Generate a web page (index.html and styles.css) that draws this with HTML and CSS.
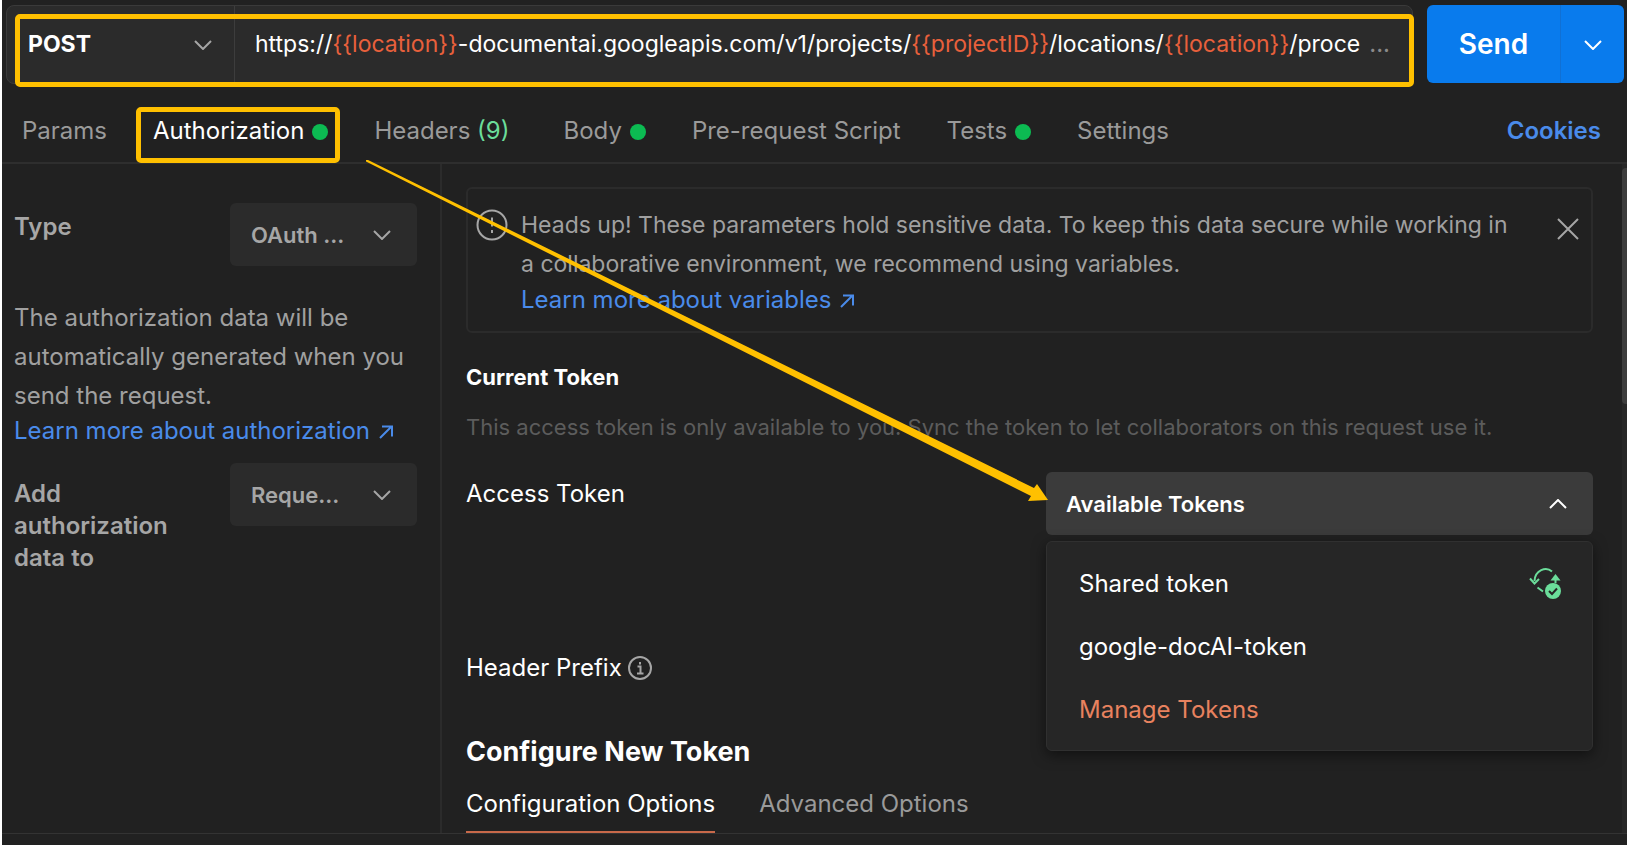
FILE: index.html
```html
<!DOCTYPE html>
<html lang="en">
<head>
<meta charset="utf-8">
<title>Request authorization</title>
<link rel="stylesheet" href="styles.css">
</head>
<body>
<div class="app">
  <header class="request">
    <div class="url-bar">
      <label class="picker method">
        <select aria-label="HTTP method"><option>POST</option></select>
        <svg class="chevron" viewBox="0 0 18 10"><path d="M1 1l8 8 8-8"/></svg>
      </label>
      <div class="url" role="textbox" aria-label="Request URL" contenteditable="true" spellcheck="false">https://<span class="var">{{location}}</span>-documentai.googleapis.com/v1/projects/<span class="var">{{projectID}}</span>/locations/<span class="var">{{location}}</span>/proce</div>
      <span class="more">...</span>
    </div>
    <div class="send">
      <button class="send-main">Send</button>
      <button class="send-more" aria-label="More send options"><svg class="chevron" viewBox="0 0 18 10"><path d="M1 1l8 8 8-8"/></svg></button>
    </div>
    <div class="mark mark-url"></div>
  </header>

  <nav class="tabs">
    <button class="tab">Params</button>
    <button class="tab active">Authorization<i class="dot"></i><span class="mark mark-tab"></span></button>
    <button class="tab headers">Headers <span class="count">(9)</span></button>
    <button class="tab">Body<i class="dot"></i></button>
    <button class="tab">Pre-request Script</button>
    <button class="tab">Tests<i class="dot"></i></button>
    <button class="tab">Settings</button>
    <a class="cookies" href="#">Cookies</a>
  </nav>

  <div class="panels">
    <aside class="side">
      <div class="field">
        <label class="field-label type-label" for="type">Type</label>
        <span class="picker">
          <select id="type"><option>OAuth ...</option></select>
          <svg class="chevron" viewBox="0 0 18 10"><path d="M1 1l8 8 8-8"/></svg>
        </span>
      </div>
      <p class="note">The authorization data will be automatically generated when you send the request.</p>
      <a class="link" href="#">Learn more about authorization <svg class="out" viewBox="0 0 14 14"><path d="M1 13L12 2M3 1.500h10v10"/></svg></a>
      <div class="field add">
        <label class="field-label" for="addto">Add authorization data to</label>
        <span class="picker">
          <select id="addto"><option>Reque...</option></select>
          <svg class="chevron" viewBox="0 0 18 10"><path d="M1 1l8 8 8-8"/></svg>
        </span>
      </div>
    </aside>

    <main class="main">
      <section class="alert">
        <svg class="warn" viewBox="0 0 32 32"><circle cx="16" cy="16" r="14.500"/><path d="M16 8.500v9M16 21v3"/></svg>
        <div class="alert-body">
          <p class="note">Heads up! These parameters hold sensitive data. To keep this data secure while working in a collaborative environment, we recommend using variables.</p>
          <a class="link" href="#">Learn more about variables <svg class="out" viewBox="0 0 14 14"><path d="M1 13L12 2M3 1.500h10v10"/></svg></a>
        </div>
        <button class="close" aria-label="Dismiss"><svg viewBox="0 0 22 22"><path d="M1 1l20 20M21 1L1 21"/></svg></button>
      </section>

      <h3 class="sub">Current Token</h3>
      <p class="hint">This access token is only available to you. Sync the token to let collaborators on this request use it.</p>

      <div class="row token-row">
        <span class="row-label" id="access">Access Token</span>
        <div class="dropdown">
          <button class="dropdown-head" aria-expanded="true">Available Tokens<svg class="chevron" viewBox="0 0 18 10"><path d="M1 9l8-8 8 8"/></svg></button>
          <div class="menu" role="menu">
            <button class="item" role="menuitem">Shared token
              <svg class="sync" viewBox="0 0 32 34"><path d="M23 4.500C17-1 6 3 5.500 14" class="ln"/><path d="M1 11.500l4.500 5 4.500-4.500M8.500 20.500l5.500 4" class="ln"/><path d="M21.500 13.500l5-6.500 5 6.500z" class="solid"/><path d="M26.500 11v5" class="ln"/><circle cx="24" cy="24" r="8" class="solid"/><path d="M20 24l3 3 5-5.500" class="tick"/></svg>
            </button>
            <button class="item" role="menuitem">google-docAI-token</button>
            <button class="item manage" role="menuitem">Manage Tokens</button>
          </div>
        </div>
      </div>

      <div class="row prefix">
        <span class="row-label">Header Prefix</span>
        <svg class="info" viewBox="0 0 24 24"><circle cx="12" cy="12" r="11"/><path d="M9.500 10.500H12.500V17M9 17.500h6.500M12 6v2.500"/></svg>
      </div>

      <h2 class="title">Configure New Token</h2>
      <div class="subtabs">
        <button class="subtab on">Configuration Options</button>
        <button class="subtab">Advanced Options</button>
      </div>
    </main>
    <div class="scroll"><div class="thumb"></div></div>
  </div>
  <footer class="foot"></footer>

  <svg class="arrow" width="700" height="360" viewBox="0 0 700 360"><path d="M0 0L2 0L668 328L671 324L682 340L662 341L665 336L0 1.500z"/></svg>
</div>
</body>
</html>
```
FILE: styles.css
```css
* { box-sizing: border-box; }
body {
  margin: 0;
  background: #212121;
  color: #fff;
  font: 24px/32px Inter, "Liberation Sans", sans-serif;
}
h2, h3, p { margin: 0; }
button, select {
  font: inherit;
  color: inherit;
  background: none;
  border: 0;
  padding: 0;
  margin: 0;
  text-align: left;
}
a { text-decoration: none; }
svg { fill: none; stroke: currentColor; stroke-width: 2; flex: none; }
.app {
  position: relative;
  min-height: 100vh;
  display: flex;
  flex-direction: column;
  border-left: 2px solid #fff;
  overflow: hidden;
}

/* request line */
.request {
  position: relative;
  display: flex;
  gap: 14px;
  padding: 5px 3px 0 4px;
}
.url-bar {
  flex: 1;
  min-width: 0;
  height: 79px;
  display: flex;
  background: #2b2b2b;
  border: 1px solid #3a3a3a;
  border-radius: 8px;
}
.picker { position: relative; display: block; }
.picker select {
  appearance: none;
  width: 100%;
  height: 100%;
  outline: 0;
}
.chevron { width: 18px; height: 10px; }
.picker .chevron {
  position: absolute;
  right: 26px;
  top: 50%;
  margin-top: -5px;
  color: #a6a6a6;
  pointer-events: none;
}
.method { width: 228px; border-right: 1px solid #3d3d3d; }
.method select { padding: 0 21px 2px; font-size: 23px; font-weight: 700; }
.method .chevron { right: 22px; }
.url {
  flex: 1;
  min-width: 0;
  padding: 22px 0 0;
  margin-left: 20px;
  font-size: 23px;
  white-space: nowrap;
  overflow: hidden;
  outline: 0;
}
.var { color: #e8603c; }
.more { padding: 22px 22px 0 4px; color: #8a8a8a; }
.send {
  width: 197px;
  height: 78px;
  display: flex;
  background: #097bed;
  border-radius: 6px;
}
.send-main { flex: 1; text-align: center; font-size: 28px; font-weight: 600; border-right: 1px solid #1070d4; }
.send-more { width: 63px; text-align: center; }
.send-more .chevron { vertical-align: middle; }

.mark { position: absolute; border: 5px solid #ffc000; border-radius: 5px; pointer-events: none; }
.mark-url { left: 13px; right: 213px; top: 14px; height: 73px; }
.mark-tab { left: -17px; right: -12px; top: -8px; height: 56px; }

/* tabs */
.tabs {
  display: flex;
  align-items: flex-start;
  gap: 46px;
  height: 80px;
  padding: 31px 26px 0 20px;
  border-bottom: 2px solid #2e2e2e;
}
.tab { position: relative; color: #9a9a9a; white-space: nowrap; }
.tab.active { color: #fff; }
.tab.headers { margin-right: 8px; }
.dot {
  display: inline-block;
  width: 16px;
  height: 16px;
  margin-left: 8px;
  border-radius: 50%;
  background: #0cbb52;
  vertical-align: -1px;
}
.count { color: #6bdd9a; }
.cookies { margin-left: auto; color: #4a8bea; font-weight: 600; }

/* panels */
.panels { flex: 1; display: flex; }
.side {
  width: 440px;
  padding: 39px 23px 0 12px;
  border-right: 2px solid #2b2b2b;
  color: #a6a6a6;
}
.field { display: flex; justify-content: space-between; }
.field-label { width: 170px; font-weight: 600; padding-top: 15px; }
.type-label { padding-top: 8px; }
.field .picker { width: 187px; height: 63px; background: #2b2b2b; border-radius: 6px; }
.field select { padding: 0 21px; font-size: 22px; font-weight: 600; }
.note { line-height: 39px; color: #a0a0a0; }
.side .note { margin-top: 32px; }
.link { display: block; color: #4a8bea; white-space: nowrap; }
.out { width: 14px; height: 14px; margin-left: 2px; }
.add { margin-top: 16px; }

.main { flex: 1; min-width: 0; padding: 23px 29px 0 24px; display: flex; flex-direction: column; }
.alert {
  display: flex;
  align-items: flex-start;
  height: 146px;
  padding: 17px 12px 0 8px;
  border: 2px solid #2b2b2b;
  border-radius: 6px;
}
.alert .note { padding-right: 24px; font-size: 23px; }
.warn { width: 32px; height: 32px; margin: 3px 13px 0 0; color: #a6a6a6; }
.alert-body { flex: 1; min-width: 0; }
.close { width: 22px; height: 22px; margin-top: 12px; margin-left: 12px; color: #a6a6a6; line-height: 0; }
.sub { margin-top: 28px; font-size: 22px; font-weight: 700; }
.hint { margin-top: 18px; font-size: 22px; color: #5c5c5c; white-space: nowrap; }
.row { display: flex; align-items: flex-start; }
.token-row { margin-top: 29px; justify-content: space-between; }
.row-label { padding-top: 6px; }
.dropdown { position: relative; width: 547px; }
.dropdown-head {
  width: 100%;
  height: 63px;
  padding: 0 26px 0 20px;
  display: flex;
  align-items: center;
  justify-content: space-between;
  background: #3b3b3b;
  border-radius: 6px;
  font-size: 22px;
  font-weight: 600;
}
.menu {
  position: absolute;
  top: 69px;
  left: 0;
  right: 0;
  padding: 10px 0 9px;
  background: #262626;
  border: 1px solid #303030;
  border-radius: 6px;
  box-shadow: 0 4px 14px rgba(0, 0, 0, .5);
}
.item {
  width: 100%;
  height: 63px;
  padding: 0 31px 0 32px;
  display: flex;
  align-items: center;
  justify-content: space-between;
}
.manage { color: #e8825f; }
.sync { width: 32px; height: 34px; color: #6bdd9a; }
.sync .solid { fill: currentColor; stroke: none; }
.sync .tick { stroke: #262626; }
.prefix { margin-top: 117px; align-items: center; gap: 6px; }
.prefix .row-label { padding-top: 0; }
.info { width: 24px; height: 24px; color: #a6a6a6; }
.title { margin-top: 50px; font-size: 27px; line-height: 36px; font-weight: 700; }
.subtabs { display: flex; gap: 44px; margin-top: 17px; }
.subtab { height: 46px; padding-bottom: 11px; color: #9a9a9a; border-bottom: 2px solid transparent; }
.subtab.on { color: #fff; border-color: #c8694a; }

.scroll { width: 5px; padding-top: 4px; background: #272727; }
.thumb { height: 236px; background: #3d3d3d; border-radius: 4px 0 0 4px; }
.foot { height: 12px; border-top: 1px solid #333; }

.arrow { position: absolute; left: 364px; top: 160px; fill: #ffc000; stroke: none; pointer-events: none; }
```
